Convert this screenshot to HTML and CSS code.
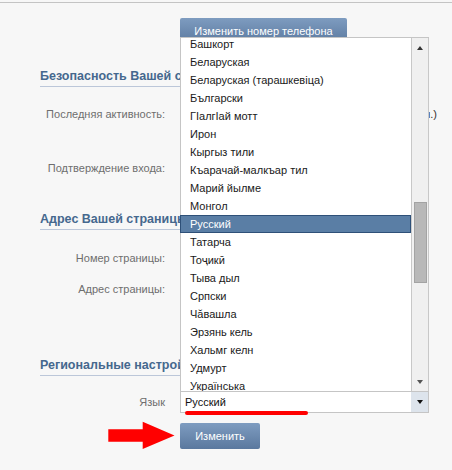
FILE: index.html
```html
<!DOCTYPE html>
<html lang="ru">
<head>
<meta charset="utf-8">
<title>Настройки</title>
<link rel="stylesheet" href="styles.css">
</head>
<body>
<div class="topline"></div>
<div class="settings">
  <div class="form-row phone-row">
    <div class="label"></div>
    <div class="value"><button class="btn btn-wide">Изменить номер телефона</button></div>
  </div>

  <h2 class="section-title first">Безопасность Вашей страницы</h2>
  <div class="form-row row-activity">
    <div class="label">Последняя активность:</div>
    <div class="value activity">Показать историю (5 мин.)</div>
  </div>
  <div class="form-row row-confirm">
    <div class="label">Подтверждение входа:</div>
    <div class="value"></div>
  </div>

  <h2 class="section-title second">Адрес Вашей страницы</h2>
  <div class="form-row row-number">
    <div class="label">Номер страницы:</div>
    <div class="value"></div>
  </div>
  <div class="form-row row-address">
    <div class="label">Адрес страницы:</div>
    <div class="value"></div>
  </div>

  <h2 class="section-title third">Региональные настройки</h2>
  <div class="form-row lang-row">
    <div class="label lang-label">Язык</div>
    <div class="value">
      <div class="lang-field">
        <div class="select">
          <span class="select-value">Русский</span>
          <span class="select-arrow"><i class="tri tri-down"></i></span>
        </div>
        <div class="dropdown">
          <ul class="options">
            <li>Башкорт</li>
            <li>Беларуская</li>
            <li>Беларуская (тарашкевіца)</li>
            <li>Български</li>
            <li>ГІалгІай мотт</li>
            <li>Ирон</li>
            <li>Кыргыз тили</li>
            <li>Къарачай-малкъар тил</li>
            <li>Марий йылме</li>
            <li>Монгол</li>
            <li class="selected">Русский</li>
            <li>Татарча</li>
            <li>Тоҷикӣ</li>
            <li>Тыва дыл</li>
            <li>Српски</li>
            <li>Чӑвашла</li>
            <li>Эрзянь кель</li>
            <li>Хальмг келн</li>
            <li>Удмурт</li>
            <li>Українська</li>
            <li>Ўзбек</li>
          </ul>
          <div class="scrollbar">
            <i class="tri tri-up"></i>
            <div class="thumb"></div>
            <i class="tri tri-down gray"></i>
          </div>
        </div>
        <span class="mark-underline"></span>
      </div>
    </div>
  </div>

  <div class="form-row submit-row">
    <div class="label"></div>
    <div class="value"><button class="btn btn-small">Изменить</button></div>
    <svg class="mark-arrow" width="80" height="40" viewBox="0 0 80 40" aria-hidden="true">
      <polygon points="8.3,14.3 42.7,14.3 42.7,6.7 74.5,20.6 42.7,34 42.7,26.7 8.3,26.7" fill="#ff0000"/>
    </svg>
  </div>
</div>
</body>
</html>
```

FILE: styles.css
```css
body {
  margin: 0;
  background: #f7f7f7;
  font-family: "Liberation Sans", Arial, sans-serif;
  font-size: 11px;
  color: #222;
}

.topline {
  height: 2px;
  border-bottom: 1px solid #c4c4c4;
}

.settings {
  padding-right: 15px;
}

.form-row {
  display: grid;
  grid-template-columns: 165px 1fr;
  column-gap: 15px;
  line-height: 14px;
}

.label {
  text-align: right;
  color: #6e6e6e;
}

.value {
  color: #333;
  white-space: nowrap;
}

.phone-row { margin-top: 15px; }
.row-activity { margin-top: 20px; }
.row-confirm { margin-top: 40px; }
.row-number { margin-top: 21px; }
.row-address { margin-top: 17px; }
.lang-row { margin-top: 15px; }
.submit-row { margin-top: 10px; position: relative; }

.activity { text-align: right; }

.section-title {
  margin: 0 12px 0 40px;
  padding-bottom: 2px;
  font-size: 12.5px;
  line-height: 16px;
  font-weight: bold;
  color: #45688e;
  border-bottom: 1px solid #bcc7d9;
  white-space: nowrap;
}
.section-title.first { margin-top: 24px; }
.section-title.second { margin-top: 36px; }
.section-title.third { margin-top: 61px; }

.btn {
  display: block;
  height: 26px;
  padding: 0;
  border: 0;
  border-radius: 2px;
  background: linear-gradient(#7e9cc0, #5a789e);
  color: #fff;
  font-family: "Liberation Sans", Arial, sans-serif;
  font-size: 11px;
  text-align: center;
}
.btn-wide { width: 167px; }
.btn-small { width: 80px; }

.lang-label {
  line-height: 20px;
  padding-top: 1px;
}

.lang-field {
  position: relative;
  width: 249px;
}

.select {
  box-sizing: border-box;
  height: 22px;
  border: 1px solid #c5c5c5;
  background: #fff;
  display: flex;
}
.select-value {
  flex: 1;
  padding-left: 4px;
  line-height: 20px;
  color: #111;
}
.select-arrow {
  width: 17px;
  background: #dde4ec;
  display: flex;
  align-items: center;
  justify-content: center;
}

.tri {
  display: block;
  width: 0;
  height: 0;
  border-left: 3.5px solid transparent;
  border-right: 3.5px solid transparent;
}
.tri-down { border-top: 4px solid #111; }
.tri-up { border-bottom: 4px solid #333; }
.tri-down.gray { border-top-color: #555; }

.dropdown {
  position: absolute;
  left: 0;
  bottom: 100%;
  box-sizing: border-box;
  width: 249px;
  height: 354px;
  border-top: 1px solid #c5c5c5;
  display: flex;
}

.options {
  flex: 1;
  margin: 0;
  padding: 0;
  list-style: none;
  overflow: hidden;
  background: linear-gradient(#c5c5c5, #c5c5c5) 0 0 / 1px 100% no-repeat, #fff;
}
.options li {
  box-sizing: border-box;
  height: 18px;
  line-height: 18px;
  padding-left: 10px;
  color: #1a1a1a;
  white-space: nowrap;
}
.options li:first-child { margin-top: -3px; }
.options li.selected {
  background: #5a7ea5;
  border: 1px solid #2e5078;
  line-height: 16px;
  padding-left: 9px;
  color: #fff;
}

.scrollbar {
  width: 16px;
  border-left: 1px solid #c8c8c8;
  border-right: 1px solid #c8c8c8;
  background: #f0f0f0;
  display: flex;
  flex-direction: column;
  align-items: center;
}
.scrollbar .tri-up { margin-top: 8px; }
.thumb {
  box-sizing: border-box;
  align-self: flex-start;
  margin: 152px 0 0 2px;
  width: 13px;
  height: 81px;
  background: #b8b8b8;
  border: 1px solid #a3a3a3;
}
.scrollbar .tri-down { margin-top: 97px; }

.mark-underline {
  position: absolute;
  left: 5px;
  top: 20px;
  width: 123px;
  height: 4px;
  border-radius: 2px;
  background: #f00;
}

.mark-arrow {
  position: absolute;
  left: 100px;
  top: -8px;
}
```
